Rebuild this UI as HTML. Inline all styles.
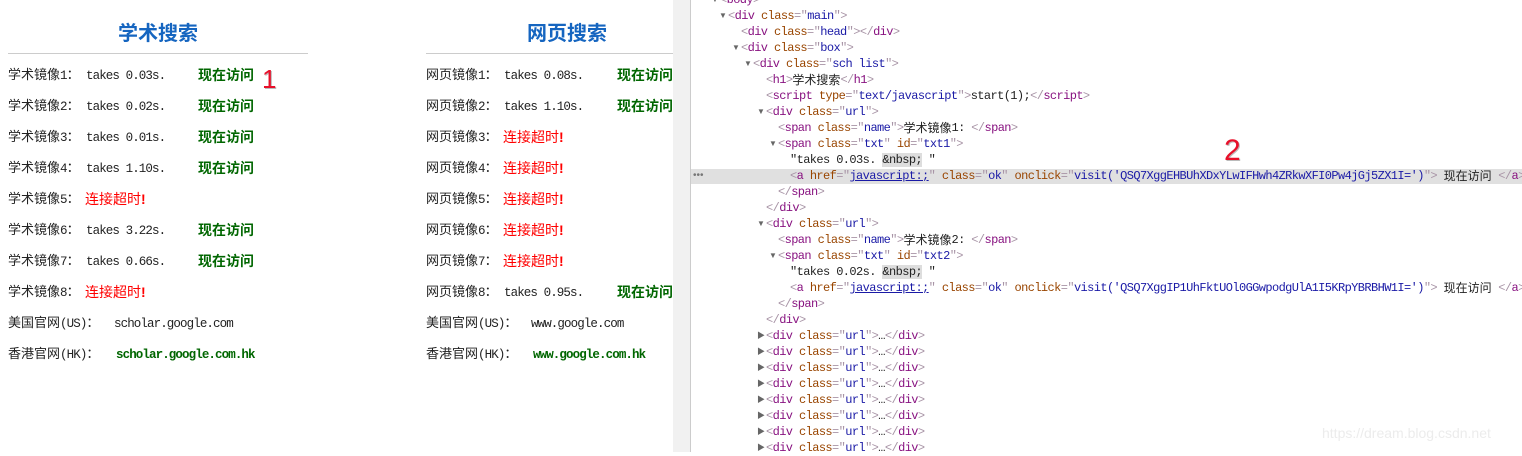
<!DOCTYPE html>
<html><head><meta charset="utf-8"><style>
*{margin:0;padding:0;box-sizing:border-box}
body{width:1522px;height:452px;overflow:hidden;background:#fff;position:relative;font-family:"Liberation Sans","Noto Sans CJK SC",sans-serif}
.a{position:absolute;white-space:nowrap}
.r{height:20px;line-height:20px;font-size:13px;color:#222}
.m{font-family:"Liberation Mono",monospace;font-size:12.5px;letter-spacing:-0.9px}
.g{color:#006600;font-weight:bold;font-size:14px}
.gm{color:#006600;font-weight:bold;font-family:"Liberation Mono",monospace;font-size:12.5px;letter-spacing:-0.9px}
.red{color:#f00;font-size:14px}
h1{position:absolute;font-size:20px;color:#1565c0;font-weight:bold;top:20px;line-height:28px}
.hr{position:absolute;top:53px;height:1px;background:#ccc}
.d{position:absolute;height:16px;line-height:16px;font-family:"Liberation Mono",monospace;font-size:12px;letter-spacing:-0.6px;white-space:nowrap;color:#222;overflow:hidden}
.b{color:#a894a6}.t{color:#881280}.at{color:#994500}.v{color:#1a1aa6}
.tri{position:absolute;font-size:8px;color:#666;line-height:16px;height:16px}
.cjk{font-family:"Noto Sans CJK SC",sans-serif;font-size:12px;letter-spacing:0;display:inline-block;height:16px;line-height:16px;vertical-align:top}
</style></head><body>
<div class="a" style="left:673px;top:0;width:17px;height:452px;background:#f1f1f1"></div>
<div class="a" style="left:690px;top:0;width:1px;height:452px;background:#ccc"></div>
<div class="a" style="left:691px;top:169px;width:831px;height:15px;background:#e0e0e0"></div>
<div class="a" style="left:693px;top:169px;font-size:10px;color:#777;line-height:14px">•••</div>

<h1 style="left:118px">学术搜索</h1>
<div class="hr" style="left:8px;width:300px"></div>
<h1 style="left:527px">网页搜索</h1>
<div class="hr" style="left:426px;width:247px"></div>

<div id="L"></div>
<div class="a" style="left:262px;top:64px;font-size:26px;color:#e8102a;font-family:'Liberation Sans',sans-serif;text-shadow:1px 1px 0 #bbb">1</div>
<div class="a" style="left:1224px;top:134px;font-size:30px;color:#e8102a;font-family:'Liberation Sans',sans-serif;text-shadow:1px 1px 0 #bbb">2</div>
<div class="a" style="left:1322px;top:425px;font-size:14px;color:#ececec">https://dream.blog.csdn.net</div>

<script>
var L=document.getElementById('L'),h='';
function row(x,y,s){h+='<div class="a r" style="left:'+x+'px;top:'+(y-10)+'px">'+s+'</div>';}
var c1=[['0.03s.'],['0.02s.'],['0.01s.'],['1.10s.'],null,['3.22s.'],['0.66s.'],null];
var c2=[['0.08s.'],['1.10s.'],null,null,null,null,null,['0.95s.']];
for(var i=0;i<8;i++){var y=75+31*i;
 row(8,y,'学术镜像<span class="m">'+(i+1)+'</span>：');
 if(c1[i]){row(86,y,'<span class="m">takes '+c1[i][0]+'</span>');row(198,y,'<span class="g">现在访问</span>');}
 else row(85,y,'<span class="red">连接超时<b>!</b></span>');
 row(426,y,'网页镜像<span class="m">'+(i+1)+'</span>：');
 if(c2[i]){row(504,y,'<span class="m">takes '+c2[i][0]+'</span>');row(617,y,'<span class="g">现在访问</span>');}
 else row(503,y,'<span class="red">连接超时<b>!</b></span>');
}
row(8,323,'美国官网<span class="m">(US)</span>：');row(114,323,'<span class="m">scholar.google.com</span>');
row(8,354,'香港官网<span class="m">(HK)</span>：');row(116,354,'<span class="gm">scholar.google.com.hk</span>');
row(426,323,'美国官网<span class="m">(US)</span>：');row(531,323,'<span class="m">www.google.com</span>');
row(426,354,'香港官网<span class="m">(HK)</span>：');row(533,354,'<span class="gm">www.google.com.hk</span>');
function op(n,attrs){var s='<span class="b">&lt;</span><span class="t">'+n+'</span>';(attrs||[]).forEach(function(a){s+=' <span class="at">'+a[0]+'</span><span class="b">="</span><span class="v">'+a[1]+'</span><span class="b">"</span>'});return s+'<span class="b">&gt;</span>';}
function cl(n){return '<span class="b">&lt;/</span><span class="t">'+n+'</span><span class="b">&gt;</span>';}
function d(x,y,s,tri,tc){h+='<div class="d" style="left:'+x+'px;top:'+(y-8)+'px;right:0">'+s+'</div>';if(tri)h+='<div class="tri" style="left:'+(x-9)+'px;top:'+(y-8)+'px">'+(tc||'▼')+'</div>';}
d(720,0,op('body'),1);
d(728,16,op('div',[['class','main']]),1);
d(741,32,op('div',[['class','head']])+cl('div'));
d(741,48,op('div',[['class','box']]),1);
d(753,64,op('div',[['class','sch list']]),1);
d(766,80,op('h1')+'<span class="cjk">学术搜索</span>'+cl('h1'));
d(766,96,op('script',[['type','text/javascript']])+'start(1);'+cl('script'));
function block(y,n,id,t,code){
d(766,y,op('div',[['class','url']]),1);
d(778,y+16,op('span',[['class','name']])+'<span class="cjk">学术镜像</span>'+n+': '+cl('span'));
d(778,y+32,op('span',[['class','txt'],['id',id]]),1);
d(790,y+48,'"takes '+t+' <span style="background:#ddd">&amp;nbsp;</span> "');
d(790,y+64,'<span class="b">&lt;</span><span class="t">a</span> <span class="at">href</span><span class="b">="</span><span class="v" style="text-decoration:underline">javascript:;</span><span class="b">"</span> <span class="at">class</span><span class="b">="</span><span class="v">ok</span><span class="b">"</span> <span class="at">onclick</span><span class="b">="</span><span class="v">visit(\''+code+'\')</span><span class="b">"&gt;</span> <span class="cjk">现在访问</span> '+cl('a'));
d(778,y+80,cl('span'));
d(766,y+96,cl('div'));
}
block(112,1,'txt1','0.03s.','QSQ7XggEHBUhXDxYLwIFHwh4ZRkwXFI0Pw4jGj5ZX1I=');
block(224,2,'txt2','0.02s.','QSQ7XggIP1UhFktUOl0GGwpodgUlA1I5KRpYBRBHW1I=');
for(var k=0;k<8;k++)d(766,336+16*k,op('div',[['class','url']])+'…'+cl('div'),1,'▶');
L.innerHTML=h;
</script>
</body></html>
